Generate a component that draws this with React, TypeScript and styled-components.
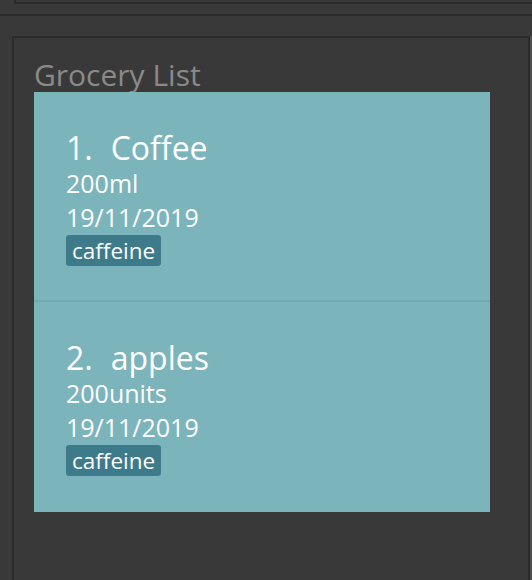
import React from "react";
import styled, { createGlobalStyle } from "styled-components";

const Global = createGlobalStyle`
  html, body { margin: 0; padding: 0; background: #393939; }
  body { font-family: "Open Sans", "Noto Sans", sans-serif; }
  #root { width: 532px; height: 580px; overflow: hidden; }
`;

const Page = styled.div`
  width: 532px;
  height: 580px;
  background: #393939;
  display: flex;
  flex-direction: column;
`;

const TopBox = styled.div`
  margin-left: 14px;
  height: 2px;
  border-left: 2px solid #2b2b2b;
  border-bottom: 2px solid #2b2b2b;
`;

const Divider = styled.div`
  margin-top: 10px;
  height: 2px;
  background: #2b2b2b;
`;

const Body = styled.div`
  flex: 1;
  display: flex;
  padding: 20px 0 0 12px;
`;

const Panel = styled.div`
  width: 496px;
  border-left: 2px solid #2b2b2b;
  border-top: 2px solid #2b2b2b;
  border-right: 2px solid #2b2b2b;
  padding: 0 20px;
  display: flex;
  flex-direction: column;
`;

const SideLine = styled.div`
  width: 2px;
  background: #4f4f4f;
`;

const Title = styled.div`
  color: #8a8a8a;
  font-size: 30px;
  line-height: 30px;
  padding-top: 22px;
  box-sizing: border-box;
  height: 54px;
  white-space: nowrap;
`;

const List = styled.div`
  background: #7cb4bc;
  display: flex;
  flex-direction: column;
  width: 456px;
`;

const Cell = styled.div<{ $last?: boolean }>`
  height: 210px;
  box-sizing: border-box;
  padding: 37px 0 0 32px;
  color: #ffffff;
  display: flex;
  flex-direction: column;
  border-bottom: ${(p) => (p.$last ? "none" : "2px solid #73aab2")};
`;

const Heading = styled.div`
  font-size: 32px;
  line-height: 37px;
  display: flex;
  gap: 18px;
`;

const Detail = styled.div`
  font-size: 25px;
  line-height: 34px;
`;

const Tags = styled.div`
  display: flex;
  gap: 6px;
  margin-top: 1px;
`;

const Tag = styled.span`
  background: #3d7b8b;
  color: #ffffff;
  font-size: 22.5px;
  line-height: 31px;
  height: 31px;
  padding: 0 6px;
  border-radius: 3px;
`;

type Item = { name: string; qty: string; date: string; tags: string[] };

const items: Item[] = [
  { name: "Coffee", qty: "200ml", date: "19/11/2019", tags: ["caffeine"] },
  { name: "apples", qty: "200units", date: "19/11/2019", tags: ["caffeine"] },
];

export default function App() {
  return (
    <>
      <Global />
      <Page>
        <TopBox />
        <Divider />
        <Body>
          <Panel>
            <Title>Grocery List</Title>
            <List>
              {items.map((it, i) => (
                <Cell key={i} $last={i === items.length - 1}>
                  <Heading>
                    <span>{i + 1}.</span>
                    <span>{it.name}</span>
                  </Heading>
                  <Detail>{it.qty}</Detail>
                  <Detail>{it.date}</Detail>
                  <Tags>
                    {it.tags.map((t) => (
                      <Tag key={t}>{t}</Tag>
                    ))}
                  </Tags>
                </Cell>
              ))}
            </List>
          </Panel>
          <SideLine />
        </Body>
      </Page>
    </>
  );
}
